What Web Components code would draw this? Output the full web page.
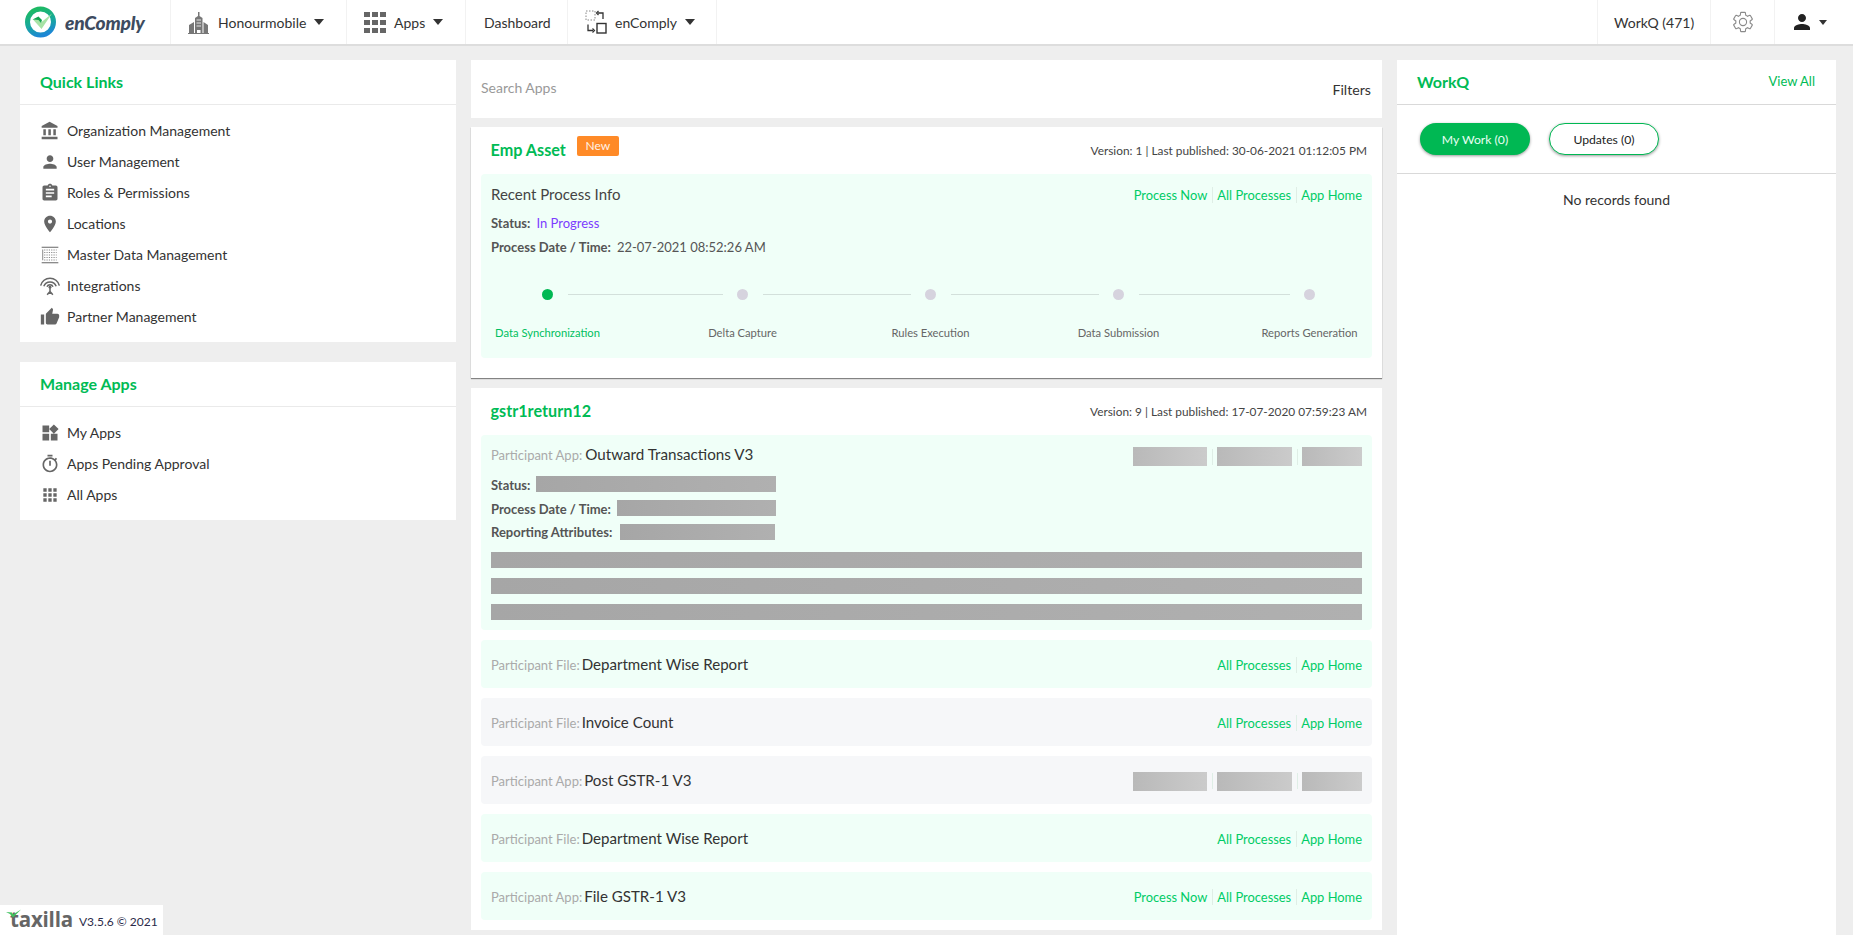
<!DOCTYPE html>
<html lang="en">
<head>
<meta charset="utf-8">
<title>enComply</title>
<style>
html,body{margin:0;height:935px;overflow:hidden;background:#eee;font-family:Lato,"Liberation Sans",sans-serif;color:#333}
</style>
</head>
<body>
<app-shell>
  <app-navbar></app-navbar>
  <div slot="left">
    <side-card title="Quick Links" items="bank:Organization Management|person:User Management|clip:Roles &amp; Permissions|pin:Locations|grid:Master Data Management|wifi:Integrations|thumb:Partner Management"></side-card>
    <side-card title="Manage Apps" items="widgets:My Apps|timer:Apps Pending Approval|apps:All Apps"></side-card>
  </div>
  <div slot="mid">
    <search-bar></search-bar>
    <app-card name="Emp Asset" badge="New" meta="Version: 1 | Last published: 30-06-2021 01:12:05 PM" pad="20" shadow>
      <recent-process></recent-process>
    </app-card>
    <app-card name="gstr1return12" meta="Version: 9 | Last published: 17-07-2020 07:59:23 AM" pad="10">
      <participant-detail></participant-detail>
      <process-row kind="Participant File:" name="Department Wise Report" tone="green" links="ah"></process-row>
      <process-row kind="Participant File:" name="Invoice Count" tone="gray" links="ah"></process-row>
      <process-row kind="Participant App:" name="Post GSTR-1 V3" tone="gray" links="blur"></process-row>
      <process-row kind="Participant File:" name="Department Wise Report" tone="green" links="ah"></process-row>
      <process-row kind="Participant App:" name="File GSTR-1 V3" tone="green" links="pah"></process-row>
    </app-card>
  </div>
  <workq-panel slot="right"></workq-panel>
</app-shell>
<version-badge></version-badge>

<script>
const ICONS = {
  bank:'<path d="M4 10v7h3v-7H4zm6 0v7h3v-7h-3zM2 22h19v-3H2v3zm14-12v7h3v-7h-3zm-4.5-9L2 6v2h19V6l-9.5-5z"/>',
  person:'<path d="M12 12c2.21 0 4-1.79 4-4s-1.79-4-4-4-4 1.79-4 4 1.79 4 4 4zm0 2c-2.67 0-8 1.34-8 4v2h16v-2c0-2.66-5.33-4-8-4z"/>',
  clip:'<path d="M19 3h-4.18C14.4 1.84 13.3 1 12 1c-1.3 0-2.4.84-2.82 2H5c-1.1 0-2 .9-2 2v14c0 1.1.9 2 2 2h14c1.1 0 2-.9 2-2V5c0-1.1-.9-2-2-2zm-7 0c.55 0 1 .45 1 1s-.45 1-1 1-1-.45-1-1 .45-1 1-1zm2 14H7v-2h7v2zm3-4H7v-2h10v2zm0-4H7V7h10v2z"/>',
  pin:'<path d="M12 2C8.13 2 5 5.13 5 9c0 5.25 7 13 7 13s7-7.75 7-13c0-3.87-3.13-7-7-7zm0 9.5c-1.38 0-2.5-1.12-2.5-2.5s1.12-2.5 2.5-2.5 2.5 1.12 2.5 2.5-1.12 2.5-2.5 2.5z"/>',
  grid:'<path d="M2 2h20v1.400H2zM2 20.600h20V22H2z"/><path d="M5 6h15M5 9h15M5 12h15M5 15h15M5 18h15" stroke="#888" stroke-width="1.300" stroke-dasharray="1.400 1.400" fill="none"/><path d="M2.500 5.400h1.400v13H2.500z" fill="#999"/>',
  wifi:'<g fill="none" stroke="#666" stroke-width="1.800"><path d="M.8 11.500a11.500 11.500 0 0 1 22.400 0"/><path d="M4.600 12.400a7.800 7.800 0 0 1 14.800 0"/><path d="M8.400 13a3.900 3.900 0 0 1 7.200 0"/><path d="M12 14v4.500M12 18.500l-3.400 4M12 18.500l3.400 4M9.400 20.800h5.200"/></g><circle cx="12" cy="13.400" r="1.700"/>',
  thumb:'<path d="M1 21h4V9H1v12zm22-11c0-1.1-.9-2-2-2h-6.31l.95-4.57.03-.32c0-.41-.17-.79-.44-1.06L14.17 1 7.59 7.59C7.22 7.95 7 8.45 7 9v10c0 1.1.9 2 2 2h9c.83 0 1.54-.5 1.84-1.22l3.02-7.05c.09-.23.14-.47.14-.73v-2z"/>',
  widgets:'<path d="M13 13v8h8v-8h-8zM3 21h8v-8H3v8zM3 3v8h8V3H3zm13.66-1.31L11 7.34 16.66 13l5.66-5.66-5.66-5.65z"/>',
  timer:'<path d="M15 1H9v2h6V1zm-4 13h2V8h-2v6zm8.03-6.61l1.42-1.42c-.43-.51-.9-.99-1.41-1.41l-1.42 1.42C16.07 4.74 14.12 4 12 4c-4.97 0-9 4.03-9 9s4.02 9 9 9 9-4.03 9-9c0-2.12-.74-4.07-1.97-5.61zM12 20c-3.87 0-7-3.13-7-7s3.13-7 7-7 7 3.13 7 7-3.13 7-7 7z"/>',
  apps:'<path d="M4 8h4V4H4v4zm6 12h4v-4h-4v4zm-6 0h4v-4H4v4zm0-6h4v-4H4v4zm6 0h4v-4h-4v4zm6-10v4h4V4h-4zm-6 4h4V4h-4v4zm6 6h4v-4h-4v4zm0 6h4v-4h-4v4z"/>'
};
function define(name, css, render){
  customElements.define(name, class extends HTMLElement{
    connectedCallback(){
      if(this.shadowRoot) return;
      const root = this.attachShadow({mode:'open'});
      root.innerHTML = '<style>'+css+'</style>'+render(this);
    }
  });
}
const esc = s => s.replace(/&/g,'&amp;');

define('app-shell', `
  :host{display:block;width:1853px;height:935px;overflow:hidden}
  .cols{display:grid;grid-template-columns:436px 911px 439px;gap:15px;padding:14px 0 0 20px;align-items:start;height:875px}
  ::slotted([slot=left]),::slotted([slot=mid]){display:flex;flex-direction:column}
  ::slotted([slot=right]){height:875px}
`, () => `<slot></slot><div class="cols"><slot name="left"></slot><slot name="mid"></slot><slot name="right"></slot></div>`);

define('nav-cell', `
  :host{display:flex;align-items:center;height:44px;box-sizing:border-box;border-right:1px solid #f2f2f2;font-size:14px;color:#333;flex:none}
`, () => `<slot></slot>`);

define('nav-caret', `
  :host{display:block;width:0;height:0;border-left:5.5px solid transparent;border-right:5.5px solid transparent;border-top:6px solid #333;flex:none}
`, () => ``);

define('app-navbar', `
  :host{display:flex;height:44px;background:#fff;border-bottom:2px solid #ddd;box-sizing:content-box;justify-content:space-between}
  .side{display:flex}
  .logo{display:flex;align-items:center;width:171px;height:44px;box-sizing:border-box;padding-left:24px;gap:7px;border-right:1px solid #f2f2f2;flex:none}
  .logo span{font:italic 900 19.2px Lato,sans-serif;color:#3d4b60;letter-spacing:-.2px}
  svg{display:block;flex:none}
  nav-cell > span{white-space:nowrap}
`, () => `
  <div class="side">
    <div class="logo">
      <svg width="34" height="34" viewBox="0 0 34 34"><defs><linearGradient id="lg" x1="0.35" y1="0" x2="0.65" y2="1"><stop offset="0" stop-color="#1db964"/><stop offset=".5" stop-color="#18a99a"/><stop offset="1" stop-color="#1d86d6"/></linearGradient></defs>
        <circle cx="16.5" cy="17" r="13" fill="none" stroke="url(#lg)" stroke-width="5"/>
        <path d="M9 14.500l5.500 0 2.500 3L28 8.500 17.500 24z" fill="#a7e3a6"/><path d="M8.500 14.500l6-3 3.500 3.500-1 3-2.500-3z" fill="#12a34f"/></svg>
      <span>enComply</span>
    </div>
    <nav-cell style="width:176px;padding-left:17px">
      <svg width="21" height="23" viewBox="0 0 21 23" fill="#777" style="margin-right:9px"><path d="M7 22V7l3-2V1h1.500v4l3 2v15h-2v-3H9v3z"/><path d="M1 22v-8l5-3v11zM15.500 22V11l4.500 3v8z"/><path d="M8.500 9h4.500M8.500 12h4.500M8.500 15h4.500" stroke="#fff" stroke-width=".8"/><path d="M0 22h21v1H0z"/></svg>
      <span>Honourmobile</span><nav-caret style="margin-left:8px"></nav-caret>
    </nav-cell>
    <nav-cell style="width:119px;padding-left:17px">
      <svg width="22" height="21" viewBox="0 0 22 21" fill="#666" style="margin-right:8px"><path d="M0 0h6v5H0zM8 0h6v5H8zM16 0h6v5h-6zM0 8h6v5H0zM8 8h6v5H8zM16 8h6v5h-6zM0 16h6v5H0zM8 16h6v5H8zM16 16h6v5h-6z"/></svg>
      <span>Apps</span><nav-caret style="margin-left:8px"></nav-caret>
    </nav-cell>
    <nav-cell style="width:102px;padding-left:18px"><span>Dashboard</span></nav-cell>
    <nav-cell style="width:149px;padding-left:17px">
      <svg width="22" height="24" viewBox="0 0 22 24" fill="none" style="margin-right:8px"><rect x="1" y="1" width="9" height="9" stroke="#888" stroke-dasharray="1.500 1.500"/><path d="M13 3h5v6" stroke="#333" stroke-width="1.300"/><path d="M13.500 1l-2 2 2 2" stroke="#333" stroke-width="1.200"/><path d="M8 20.500H3v-6" stroke="#333" stroke-width="1.300"/><path d="M7.500 18.500l2 2-2 2" stroke="#333" stroke-width="1.200"/><rect x="12" y="13.500" width="9" height="9.500" stroke="#333" stroke-width="1.400"/></svg>
      <span>enComply</span><nav-caret style="margin-left:8px"></nav-caret>
    </nav-cell>
  </div>
  <div class="side">
    <nav-cell style="width:114px;padding-left:16px;border-left:1px solid #f2f2f2"><span>WorkQ (471)</span></nav-cell>
    <nav-cell style="width:64px;padding-left:20px">
      <svg width="24" height="24" viewBox="0 0 24 24" fill="none" stroke="#8a8a8a" stroke-width="1.100"><path d="M19.14 12.94c.04-.3.06-.61.06-.94 0-.32-.02-.64-.07-.94l2.03-1.58a.49.49 0 0 0 .12-.61l-1.92-3.32a.488.488 0 0 0-.59-.22l-2.39.96c-.5-.38-1.03-.7-1.62-.94l-.36-2.54a.484.484 0 0 0-.48-.41h-3.84c-.24 0-.43.17-.47.41l-.36 2.54c-.59.24-1.13.57-1.62.94l-2.39-.96c-.22-.08-.47 0-.59.22L2.74 8.87c-.12.21-.08.47.12.61l2.03 1.58c-.05.3-.09.63-.09.94s.02.64.07.94l-2.03 1.58a.49.49 0 0 0-.12.61l1.92 3.32c.12.22.37.29.59.22l2.39-.96c.5.38 1.03.7 1.62.94l.36 2.54c.05.24.24.41.48.41h3.84c.24 0 .44-.17.47-.41l.36-2.54c.59-.24 1.13-.56 1.62-.94l2.39.96c.22.08.47 0 .59-.22l1.92-3.32c.12-.22.07-.47-.12-.61l-2.01-1.58z"/><circle cx="12" cy="12" r="3.600"/></svg>
    </nav-cell>
    <nav-cell style="width:78px;padding-left:17px;border-right:0">
      <svg width="20" height="20" viewBox="2 2 20 20" fill="#222"><path d="M12 12c2.210 0 4-1.790 4-4s-1.790-4-4-4-4 1.790-4 4 1.790 4 4 4zm0 2c-2.670 0-8 1.340-8 4v2h16v-2c0-2.660-5.330-4-8-4z"/></svg>
      <nav-caret style="margin-left:7px;border-left-width:4.500px;border-right-width:4.500px;border-top-width:5px"></nav-caret>
    </nav-cell>
  </div>
`);

define('side-card', `
  :host{display:block;background:#fff;margin-bottom:20px}
  h2{margin:0;height:44px;box-sizing:border-box;padding:0 20px 2px;display:flex;align-items:center;font:700 16px Lato,sans-serif;color:#00bb55;border-bottom:0}
  .rule{height:1px;background:#eaeaea}
  ul{margin:0;padding:10px 0 10px 20px;list-style:none}
  li{display:flex;align-items:center;height:31px;font-size:14px;color:#333}
  svg{width:20px;height:20px;fill:#666;margin-right:7px;flex:none}
`, el => {
  const items = el.getAttribute('items').split('|').map(x=>{
    const [ic,t] = x.split(':');
    return `<li><svg viewBox="0 0 24 24">${ICONS[ic]}</svg><span>${esc(t)}</span></li>`;
  }).join('');
  return `<h2>${el.getAttribute('title')}</h2><div class="rule"></div><ul>${items}</ul>`;
});

define('search-bar', `
  :host{display:flex;align-items:center;justify-content:space-between;height:58px;background:#fff;padding:0 11px 0 10px;box-sizing:border-box;margin-bottom:9px;font-size:14px}
  .s{color:#999;margin-top:-4px}
  .f{color:#333;margin-top:1px;font-size:14.2px}
`, () => `<span class="s">Search Apps</span><span class="f">Filters</span>`);

define('app-card', `
  :host{display:block;background:#fff;margin-bottom:10px}
  :host([shadow]){box-shadow:0 1px 1px rgba(0,0,0,.45)}
  .head{display:flex;align-items:flex-start;height:47px;padding:0 15px 0 19.5px;box-sizing:border-box}
  h3{margin:13px 0 0;font:700 16.2px/19px Lato,sans-serif;color:#00bb55}
  .badge{margin:9px 0 0 11px;width:42px;height:20px;background:#ff8a27;border-radius:2px;color:#fff3e6;font-size:12px;line-height:20px;text-align:center}
  .meta{margin:16px 0 0 auto;font-size:11.85px;line-height:16px;color:#444}
  .body{display:flex;flex-direction:column;gap:10px;padding:0 10px}
`, el => {
  const b = el.getAttribute('badge');
  return `<div class="head"><h3>${el.getAttribute('name')}</h3>${b?`<span class="badge">${b}</span>`:''}<span class="meta">${el.getAttribute('meta')}</span></div><div class="body" style="padding-bottom:${el.getAttribute('pad')}px"><slot></slot></div>`;
});

const LINKCSS = `
  .links{display:flex;align-items:center;font-size:12.9px;color:#00cc66;margin-left:auto;margin-top:2px;white-space:nowrap}
  .sep{width:1px;height:16px;background:#dfeee6;margin:0 4.5px}
  .ph{height:19px;background:linear-gradient(90deg,#b9b9b9,#cbcbcb)}
`;
function linksHtml(mode){
  if(mode==='blur') return `<div class="links"><div class="ph" style="width:74px"></div><i class="sep"></i><div class="ph" style="width:75px"></div><i class="sep"></i><div class="ph" style="width:60px"></div></div>`;
  const s = '<i class="sep"></i>';
  const a = `<span>All Processes</span>${s}<span>App Home</span>`;
  return `<div class="links">${mode==='pah'?`<span>Process Now</span>${s}`:''}${a}</div>`;
}

define('recent-process', `
  :host{display:block;background:#f0fff8;border-radius:4px;height:184px;padding:0 10px;box-sizing:border-box}
  .top{display:flex;align-items:center;height:40px}
  .t{font-size:15px;color:#444}
  ${LINKCSS}
  .row{height:24px;display:flex;align-items:center;font-size:13px;color:#555}
  b{font-weight:700;margin-right:6px}
  .p{color:#7c3cff}
  .row.s{margin-top:-3px}
  process-stepper{margin-top:30px}
`, () => `<div class="top"><span class="t">Recent Process Info</span>${linksHtml('pah')}</div>
  <div class="row s"><b>Status:</b><span class="p">In Progress</span></div>
  <div class="row"><b style="margin-right:6px">Process Date / Time:</b><span>22-07-2021 08:52:26 AM</span></div>
  <process-stepper></process-stepper>`);

define('process-stepper', `
  :host{display:block;padding-left:56.5px}
  .grid{display:grid;grid-template-columns:195px 188px 188px 191px 0;}
  .bar{display:flex;align-items:center;height:11px}
  .dot{width:11px;height:11px;border-radius:50%;background:#d6d3de;margin-left:-5.5px;flex:none}
  .on .dot{background:#00b853}
  .line{height:1px;background:#d3e0db;margin-left:14.5px;width:calc(100% - 40px);flex:none}
  .lab{display:inline-block;margin-top:25px;transform:translateX(-50%);white-space:nowrap;font-size:11.2px;line-height:16px;color:#666}
  .on .lab{color:#00c060}
`, () => {
  const l = ['Data Synchronization','Delta Capture','Rules Execution','Data Submission','Reports Generation'];
  return `<div class="grid">`+l.map((t,i)=>`<div class="${i==0?'on':''}"><div class="bar"><span class="dot"></span>${i<4?'<span class="line"></span>':''}</div><span class="lab">${t}</span></div>`).join('')+`</div>`;
});

define('participant-detail', `
  :host{display:block;background:#f0fff8;border-radius:4px;height:195px;padding:0 10px;box-sizing:border-box}
  .top{display:flex;align-items:center;height:38px;margin-bottom:2px}
  .k{font-size:13px;color:#aaa;margin-right:3px;margin-top:1px}
  .n{font-size:15.2px;color:#333}
  ${LINKCSS}
  .links{margin-top:5px}
  .row{height:24px;display:flex;align-items:center;font-size:13px;color:#555}
  .row.s{margin-top:-3px}
  b{font-weight:700;margin-top:1px}
  .g{height:16px;background:linear-gradient(90deg,#a6a6a6,#b0b0b0)}
  .bars{display:flex;flex-direction:column;gap:10px;margin-top:8px}
`, () => `<div class="top"><span class="k">Participant App:</span><span class="n">Outward Transactions V3</span>${linksHtml('blur')}</div>
  <div class="row s"><b style="margin-right:6px">Status:</b><div class="g" style="width:240px"></div></div>
  <div class="row"><b style="margin-right:6px">Process Date / Time:</b><div class="g" style="width:159px"></div></div>
  <div class="row"><b style="margin:-1px 8px 0 0">Reporting Attributes:</b><div class="g" style="width:155px"></div></div>
  <div class="bars"><div class="g"></div><div class="g"></div><div class="g"></div></div>`);

define('process-row', `
  :host{display:flex;align-items:center;height:48px;padding:0 10px;box-sizing:border-box;border-radius:4px}
  :host([tone=green]){background:#f0fff8}
  :host([tone=gray]){background:#f6f7f9}
  .k{font-size:13px;color:#aaa;margin-right:2px;margin-top:1px}
  .n{font-size:15.1px;color:#333}
  ${LINKCSS}
`, el => `<span class="k">${el.getAttribute('kind')}</span><span class="n">${el.getAttribute('name')}</span>${linksHtml(el.getAttribute('links'))}`);

define('workq-panel', `
  :host{display:block;background:#fff}
  .head{display:flex;align-items:center;justify-content:space-between;padding:0 21px 2px 20px;box-sizing:border-box;border-bottom:1px solid #d9d9d9;height:45px}
  h2{margin:0;font:700 16px Lato,sans-serif;color:#00bb55}
  a{font-size:13px;color:#00bb55}
  .tabs{display:flex;gap:19px;height:69px;box-sizing:border-box;padding:18px 0 0 23px;border-bottom:1px solid #d9d9d9}
  button{width:110px;height:32px;border-radius:16px;font:12.2px Lato,sans-serif;box-shadow:0 1px 3px rgba(0,0,0,.4);box-sizing:border-box;padding:0}
  .a{background:#00b853;border:0;color:#e9fff3}
  .b{background:#fff;border:1px solid #00b853;color:#222}
  p{margin:0;text-align:center;font-size:14px;color:#333;padding-top:17px}
`, () => `<div class="head"><h2>WorkQ</h2><a>View All</a></div>
  <div class="tabs"><button class="a">My Work (0)</button><button class="b">Updates (0)</button></div>
  <p>No records found</p>`);

define('version-badge', `
  :host{position:fixed;left:0;bottom:0;width:163px;height:30px;background:#fff;display:flex;align-items:center;box-sizing:border-box;padding-left:10px}
  .t{font:700 20.5px/30px "Open Sans",sans-serif;color:#666;letter-spacing:-.2px;width:69px;flex:none;margin-top:-2px}
  .v{font-size:12px;color:#2b2b4a;margin-top:3px}
  svg{position:absolute;left:5px;top:4px}
`, () => `<span class="t">taxilla</span><span class="v">V3.5.6 © 2021</span>
  <svg width="18" height="10" viewBox="0 0 18 10"><path d="M1 3l6 .6 1 2L16 .5 8 8.500 5 5z" fill="#3fc25e"/></svg>`);
</script>
</body>
</html>
